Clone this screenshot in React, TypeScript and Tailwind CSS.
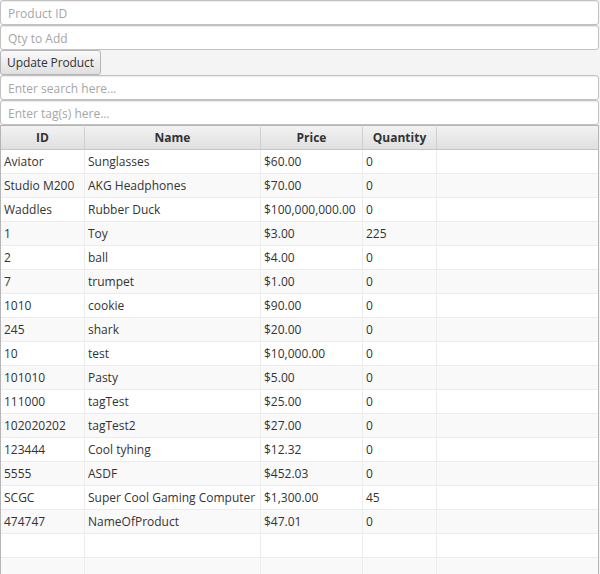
const products = [
  ["Aviator", "Sunglasses", "$60.00", "0"],
  ["Studio M200", "AKG Headphones", "$70.00", "0"],
  ["Waddles", "Rubber Duck", "$100,000,000.00", "0"],
  ["1", "Toy", "$3.00", "225"],
  ["2", "ball", "$4.00", "0"],
  ["7", "trumpet", "$1.00", "0"],
  ["1010", "cookie", "$90.00", "0"],
  ["245", "shark", "$20.00", "0"],
  ["10", "test", "$10,000.00", "0"],
  ["101010", "Pasty", "$5.00", "0"],
  ["111000", "tagTest", "$25.00", "0"],
  ["102020202", "tagTest2", "$27.00", "0"],
  ["123444", "Cool tyhing", "$12.32", "0"],
  ["5555", "ASDF", "$452.03", "0"],
  ["SCGC", "Super Cool Gaming Computer", "$1,300.00", "45"],
  ["474747", "NameOfProduct", "$47.01", "0"],
]

function Field({ placeholder }: { placeholder: string }) {
  return (
    <input
      placeholder={placeholder}
      className="block h-[25px] w-full rounded-[3px] border border-[#c2c2c2] bg-white px-[7px] pt-px text-[12px] text-[#333] shadow-[inset_0_1px_1px_rgba(0,0,0,0.08)] outline-none placeholder:text-[#a6a6a6]"
    />
  )
}

function Row({ cells, odd }: { cells: string[]; odd: boolean }) {
  return (
    <div className={`flex h-6 pt-px ${odd ? "bg-[#f9f9f9]" : "bg-white"}`}>
      <div className="flex w-[84px] items-center border-r border-b border-[#ececec] pl-[3px]">{cells[0]}</div>
      <div className="flex w-[176px] items-center border-r border-b border-[#ececec] pl-[3px]">{cells[1]}</div>
      <div className="flex w-[102px] items-center border-r border-b border-[#ececec] pl-[3px]">{cells[2]}</div>
      <div className="flex w-[74px] items-center border-r border-b border-[#ececec] pl-[3px]">{cells[3]}</div>
      <div className="flex-1 border-b border-[#ececec]" />
    </div>
  )
}

export default function App() {
  const empty = ["", "", "", ""]
  return (
    <div className="h-[574px] w-[600px] overflow-hidden bg-[#f4f4f4] text-[12px] text-[#333] font-['Open_Sans',sans-serif]">
      <div className="w-[599px]">
        <Field placeholder="Product ID" />
        <Field placeholder="Qty to Add" />
        <button className="block h-[25px] rounded-[3px] border border-[#b5b5b5] bg-gradient-to-b from-[#fafafa] to-[#e0e0e0] px-[6px] pt-px text-[12px] tracking-[-0.1px] text-[#333]">
          Update Product
        </button>
        <Field placeholder="Enter search here..." />
        <Field placeholder="Enter tag(s) here..." />
        <div className="border border-[#b5b5b5] bg-white">
          <div className="flex h-6 border-b border-[#c5c5c5] bg-gradient-to-b from-[#f2f2f2] to-[#e0e0e0] pt-px font-bold">
            <div className="flex w-[84px] items-center justify-center border-r border-[#cfcfcf]">ID</div>
            <div className="flex w-[176px] items-center justify-center border-r border-[#cfcfcf]">Name</div>
            <div className="flex w-[102px] items-center justify-center border-r border-[#cfcfcf]">Price</div>
            <div className="flex w-[74px] items-center justify-center border-r border-[#cfcfcf]">Quantity</div>
            <div className="flex-1" />
          </div>
          {products.map((p, i) => (
            <Row key={i} cells={p} odd={i % 2 === 1} />
          ))}
          <Row cells={empty} odd={false} />
          <Row cells={empty} odd={true} />
        </div>
      </div>
    </div>
  )
}
